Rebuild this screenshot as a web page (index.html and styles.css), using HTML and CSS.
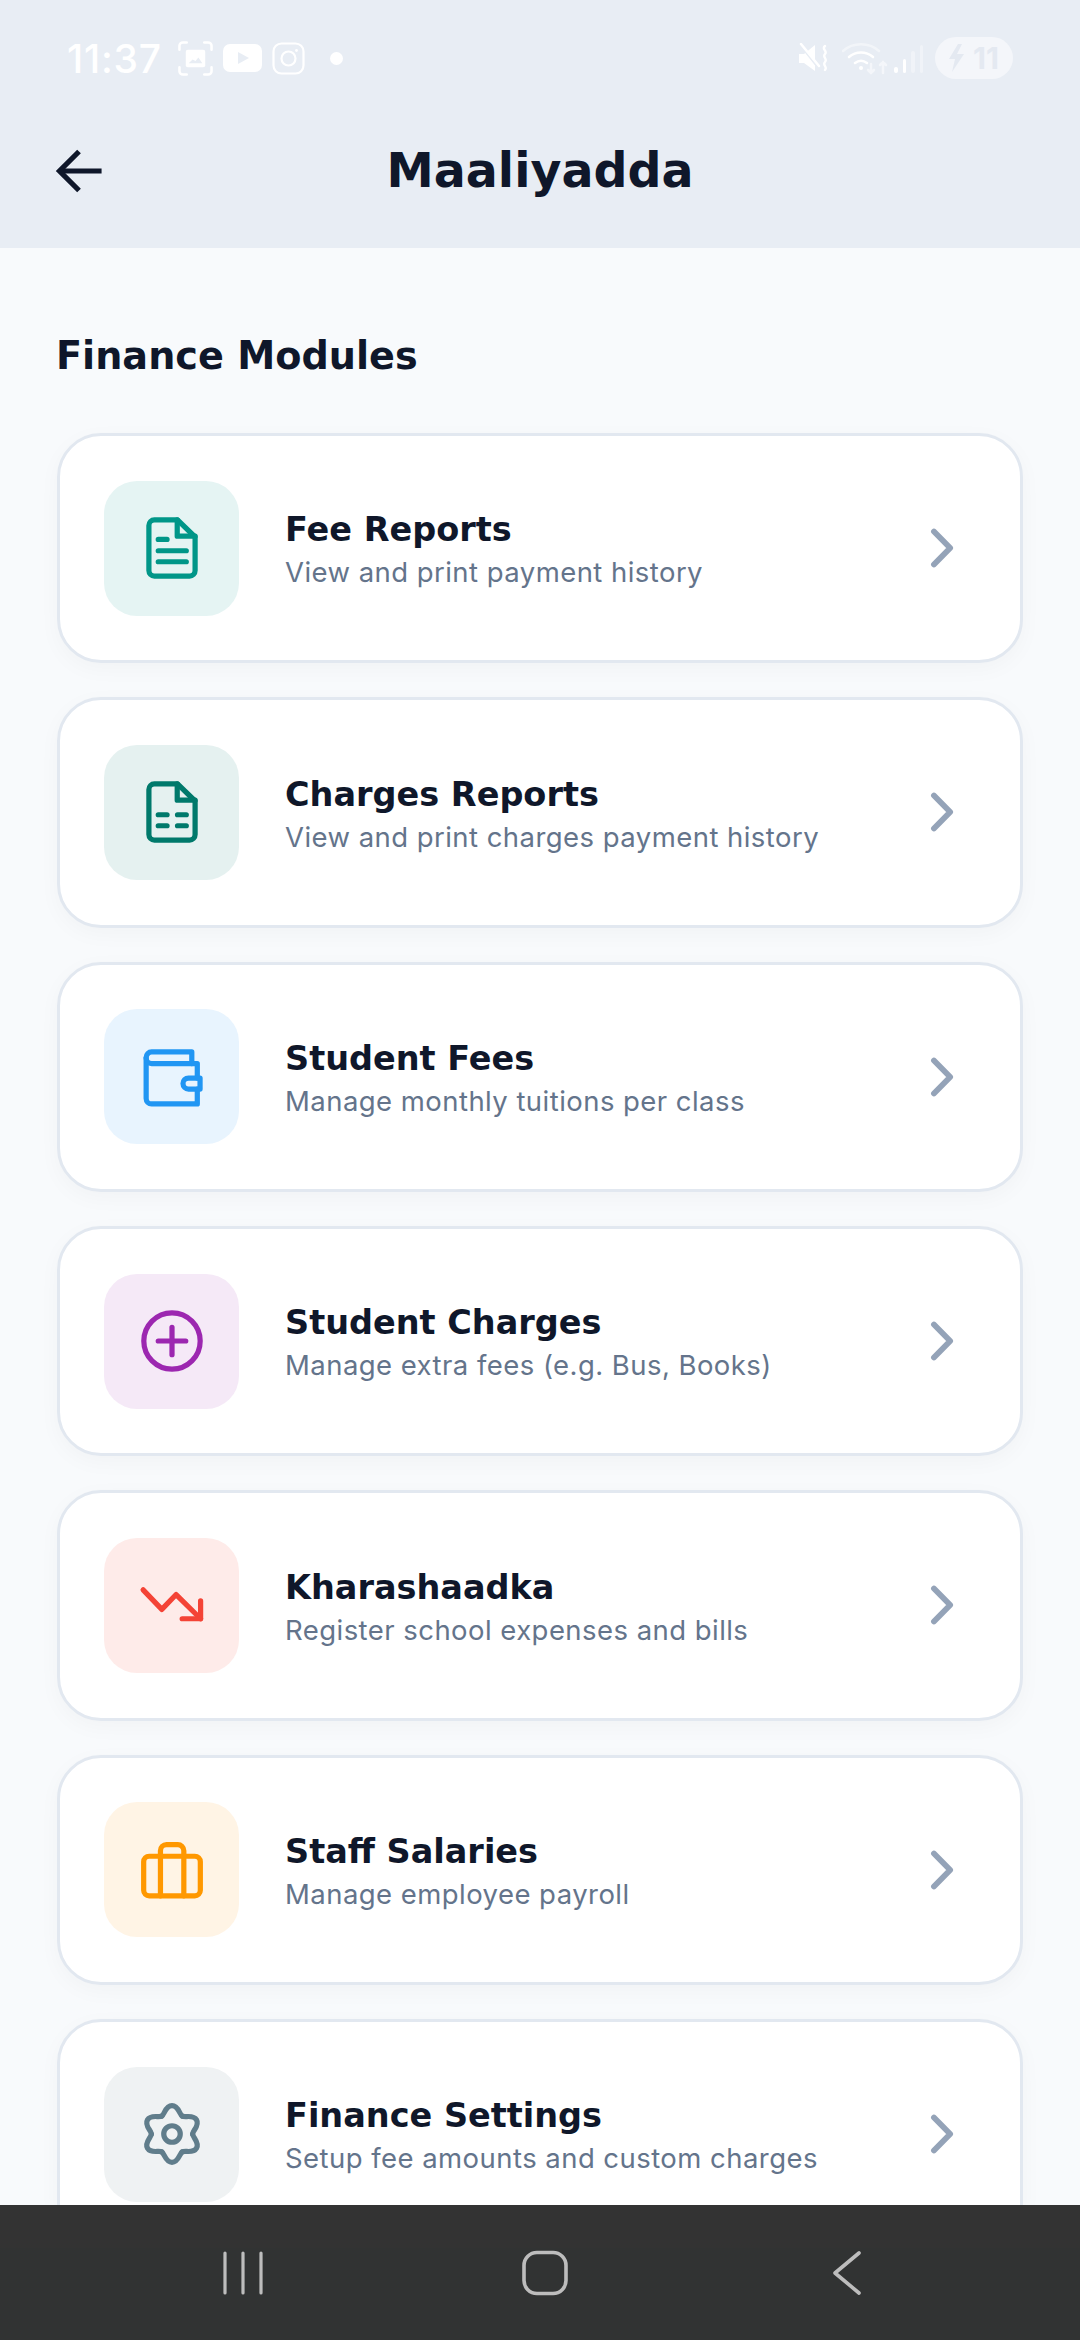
FILE: index.html
```html
<!DOCTYPE html>
<html lang="en">

<head>
  <meta charset="UTF-8">
  <meta name="viewport" content="width=device-width, initial-scale=1.0">
  <title>Maaliyadda</title>
  <link rel="stylesheet" href="styles.css">
</head>

<body>
  <div class="screen">
    <header class="header">
      <div class="status-bar">
        <div class="status-left">
          <span class="time">11:37</span>
          <svg class="st-icon" width="35" height="35" viewBox="0 0 36 36" fill="none" stroke="#fff" stroke-width="2.6" stroke-linecap="round">
            <path d="M1.5 9V5a3.500 3.500 0 0 1 3.500-3.500H9M27 1.500h4A3.500 3.500 0 0 1 34.500 5v4M1.500 27v4A3.500 3.500 0 0 0 5 34.500h4M27 34.500h4a3.500 3.500 0 0 0 3.500-3.500v-4" />
            <rect x="8" y="9" width="20" height="18" rx="2" fill="#fff" stroke="none" />
            <path d="M11 23l4-4 3 1.500 3-3.500 4 6z" fill="#e8edf4" stroke="none" />
          </svg>
          <svg class="st-icon" width="39" height="28" viewBox="0 0 39 28">
            <rect width="39" height="28" rx="7" fill="#fff" />
            <path d="M15 8l11 6-11 6z" fill="#e8edf4" />
          </svg>
          <svg class="st-icon" width="33" height="33" viewBox="0 0 33 33" fill="none" stroke="#fff" stroke-width="2.200">
            <rect x="1.500" y="1.500" width="30" height="30" rx="8" />
            <circle cx="16.500" cy="16.500" r="7" />
            <circle cx="24.500" cy="8.500" r="1.400" fill="#fff" stroke="none" />
          </svg>
          <span class="st-dot"></span>
        </div>
        <div class="status-right">
          <svg class="st-icon" width="30" height="30" viewBox="0 0 30 30" fill="none" stroke="#fff" stroke-linecap="round">
            <path d="M1 11h5l11-9v26l-11-8h-5z" fill="#fff" stroke="none" />
            <path d="M2 1l19 24" stroke="#e8edf4" stroke-width="3" />
            <path d="M3 1l18 22" stroke-width="2.500" />
            <path d="M27 3c-4 3 3 5 0 8s3 5 0 8 3 5 0 8" stroke-width="2.400" />
          </svg>
          <svg class="st-wifi" width="46" height="34" viewBox="0 0 46 34" fill="none" stroke="#fff" stroke-width="2.600" stroke-linecap="round">
            <path d="M1 9c10-9 26-9 36 0" opacity=".45" />
            <path d="M7 15c7-6 17-6 24 0" />
            <path d="M13 21c4-3 8-3 12 0" />
            <circle cx="19" cy="26" r="2" fill="#fff" stroke="none" />
            <path d="M29 22v9m-3-3l3 3 3-3" opacity=".5" />
            <path d="M41 31v-11m-3 3l3-3 3 3" opacity=".5" />
          </svg>
          <div class="st-signal">
            <span class="bar b1"></span>
            <span class="bar b2"></span>
            <span class="bar b3"></span>
            <span class="bar b4"></span>
          </div>
          <div class="st-battery">
            <svg width="16" height="28" viewBox="0 0 16 28">
              <path d="M9 0L0 15h6l-3 13L15 10H8l5-10z" fill="#e4e9f1" />
            </svg>
            <span>11</span>
          </div>
        </div>
      </div>
      <div class="app-bar">
        <svg class="back" width="66" height="66" viewBox="0 0 24 24" fill="none" stroke="#0f172a" stroke-width="1.900" stroke-linecap="butt">
          <path d="M21.300 12H6.500" />
          <path d="M13.100 4.900L6 12l7.100 7.100" />
        </svg>
        <h1 class="page-title">Maaliyadda</h1>
        <span class="app-bar-spacer"></span>
      </div>
    </header>

    <main class="content">
      <h2 class="section-title">Finance Modules</h2>
      <div class="list">

        <div class="card">
          <div class="card-icon teal">
            <svg width="66" height="66" viewBox="0 0 24 24" fill="none" stroke="#009688" stroke-width="1.900" stroke-linecap="round" stroke-linejoin="round">
              <path d="M5.600 1.800H14L20.400 8V20.200a2 2 0 0 1-2 2H5.600a2 2 0 0 1-2-2V3.800a2 2 0 0 1 2-2z" />
              <path d="M13.900 1.800V7.700H20.400" />
              <path d="M7 8.900H10.200M7 13H17.200M7 17H17.200" />
            </svg>
          </div>
          <div class="card-text">
            <div class="card-title">Fee Reports</div>
            <div class="card-sub">View and print payment history</div>
          </div>
          <svg class="chevron" width="66" height="66" viewBox="0 0 24 24" fill="none" stroke="#94a3b8" stroke-width="2.100" stroke-linecap="round" stroke-linejoin="round">
            <path d="M9.800 6L15.700 12L9.800 18" />
          </svg>
        </div>

        <div class="card">
          <div class="card-icon green">
            <svg width="66" height="66" viewBox="0 0 24 24" fill="none" stroke="#00796b" stroke-width="1.900" stroke-linecap="round" stroke-linejoin="round">
              <path d="M5.600 1.800H14L20.400 8V20.200a2 2 0 0 1-2 2H5.600a2 2 0 0 1-2-2V3.800a2 2 0 0 1 2-2z" />
              <path d="M13.900 1.800V7.700H20.400" />
              <path d="M7 13H10.200M14 13H17.200M7 17H10.200M14 17H17.200" />
            </svg>
          </div>
          <div class="card-text">
            <div class="card-title">Charges Reports</div>
            <div class="card-sub">View and print charges payment history</div>
          </div>
          <svg class="chevron" width="66" height="66" viewBox="0 0 24 24" fill="none" stroke="#94a3b8" stroke-width="2.100" stroke-linecap="round" stroke-linejoin="round">
            <path d="M9.800 6L15.700 12L9.800 18" />
          </svg>
        </div>

        <div class="card">
          <div class="card-icon blue">
            <svg width="66" height="66" viewBox="0 0 24 24" fill="none" stroke="#2196f3" stroke-width="1.900" stroke-linecap="round" stroke-linejoin="round">
              <path d="M19.200 7.100V2.900H4.600a2 2 0 0 0-2 2V19.800a2 2 0 0 0 2 2H21.200V16.400" />
              <path d="M21.200 12.400V7.100H4.600a2 2 0 0 1-2-2" />
              <path d="M22.200 12.400H18a2 2 0 0 0 0 4h4.200z" />
            </svg>
          </div>
          <div class="card-text">
            <div class="card-title">Student Fees</div>
            <div class="card-sub">Manage monthly tuitions per class</div>
          </div>
          <svg class="chevron" width="66" height="66" viewBox="0 0 24 24" fill="none" stroke="#94a3b8" stroke-width="2.100" stroke-linecap="round" stroke-linejoin="round">
            <path d="M9.800 6L15.700 12L9.800 18" />
          </svg>
        </div>

        <div class="card">
          <div class="card-icon purple">
            <svg width="66" height="66" viewBox="0 0 24 24" fill="none" stroke="#9c27b0" stroke-width="1.900" stroke-linecap="round" stroke-linejoin="round">
              <circle cx="12" cy="12" r="10.250" />
              <path d="M7 12H17M12 7V17" />
            </svg>
          </div>
          <div class="card-text">
            <div class="card-title">Student Charges</div>
            <div class="card-sub">Manage extra fees (e.g. Bus, Books)</div>
          </div>
          <svg class="chevron" width="66" height="66" viewBox="0 0 24 24" fill="none" stroke="#94a3b8" stroke-width="2.100" stroke-linecap="round" stroke-linejoin="round">
            <path d="M9.800 6L15.700 12L9.800 18" />
          </svg>
        </div>

        <div class="card">
          <div class="card-icon red">
            <svg width="66" height="66" viewBox="0 0 24 24" fill="none" stroke="#f44336" stroke-width="1.900" stroke-linecap="round" stroke-linejoin="round">
              <path d="M1.500 6.500L8.300 13.600L13.500 8.200L22.400 17" />
              <path d="M22.400 10.500V17H15.700" />
            </svg>
          </div>
          <div class="card-text">
            <div class="card-title">Kharashaadka</div>
            <div class="card-sub">Register school expenses and bills</div>
          </div>
          <svg class="chevron" width="66" height="66" viewBox="0 0 24 24" fill="none" stroke="#94a3b8" stroke-width="2.100" stroke-linecap="round" stroke-linejoin="round">
            <path d="M9.800 6L15.700 12L9.800 18" />
          </svg>
        </div>

        <div class="card">
          <div class="card-icon orange">
            <svg width="66" height="66" viewBox="0 0 24 24" fill="none" stroke="#ff9800" stroke-width="1.900" stroke-linecap="round" stroke-linejoin="round">
              <rect x="1.700" y="7" width="20.600" height="14.400" rx="2" />
              <path d="M7.800 21.400V5a2.200 2.200 0 0 1 2.200-2.200h4A2.200 2.200 0 0 1 16.300 5V21.400" />
            </svg>
          </div>
          <div class="card-text">
            <div class="card-title">Staff Salaries</div>
            <div class="card-sub">Manage employee payroll</div>
          </div>
          <svg class="chevron" width="66" height="66" viewBox="0 0 24 24" fill="none" stroke="#94a3b8" stroke-width="2.100" stroke-linecap="round" stroke-linejoin="round">
            <path d="M9.800 6L15.700 12L9.800 18" />
          </svg>
        </div>

        <div class="card">
          <div class="card-icon slate">
            <svg width="66" height="66" viewBox="0 0 24 24" fill="none" stroke="#607d8b" stroke-width="1.900" stroke-linecap="round" stroke-linejoin="round">
              <circle cx="12" cy="12" r="3" />
              <path id="lobe" d="M8.250 5.500C9.300 4.900 9.600 1.700 12 1.700S14.700 4.900 15.750 5.500" />
              <use href="#lobe" transform="rotate(60 12 12)" />
              <use href="#lobe" transform="rotate(120 12 12)" />
              <use href="#lobe" transform="rotate(180 12 12)" />
              <use href="#lobe" transform="rotate(240 12 12)" />
              <use href="#lobe" transform="rotate(300 12 12)" />
            </svg>
          </div>
          <div class="card-text">
            <div class="card-title">Finance Settings</div>
            <div class="card-sub">Setup fee amounts and custom charges</div>
          </div>
          <svg class="chevron" width="66" height="66" viewBox="0 0 24 24" fill="none" stroke="#94a3b8" stroke-width="2.100" stroke-linecap="round" stroke-linejoin="round">
            <path d="M9.800 6L15.700 12L9.800 18" />
          </svg>
        </div>

      </div>
    </main>

    <nav class="nav-bar">
      <svg width="60" height="60" viewBox="0 0 60 60" fill="none" stroke="#bdbdbd" stroke-width="3.200" stroke-linecap="round">
        <path d="M12 10V50M30 10V50M48 10V50" />
      </svg>
      <svg width="60" height="60" viewBox="0 0 60 60" fill="none" stroke="#bdbdbd" stroke-width="3.600">
        <rect x="9" y="9.500" width="42" height="41" rx="13" />
      </svg>
      <svg width="60" height="60" viewBox="0 0 60 60" fill="none" stroke="#bdbdbd" stroke-width="3.600" stroke-linecap="round" stroke-linejoin="round">
        <path d="M42 10L18 30L42 50" />
      </svg>
    </nav>
  </div>
</body>

</html>
```

FILE: styles.css
```css
* {
  box-sizing: border-box;
}

html,
body {
  margin: 0;
  padding: 0;
}

body {
  font-family: "Inter", "Liberation Sans", sans-serif;
  color: #0f172a;
}

.screen {
  display: flex;
  flex-direction: column;
  width: 1080px;
  height: 2340px;
  overflow: hidden;
  background-color: #f8fafc;
}

/* header */
.header {
  flex: none;
  height: 248px;
  background-color: #e8edf4;
}

.status-bar {
  display: flex;
  align-items: center;
  justify-content: space-between;
  height: 116px;
  padding: 0 67px 0 67px;
}

.status-left,
.status-right {
  display: flex;
  align-items: center;
}

.status-left svg {
  margin-left: 10px;
}

.time {
  width: 101px;
  font-size: 39px;
  font-weight: 500;
  letter-spacing: 0.8px;
  color: #fff;
}

.st-icon {
  display: block;
  flex: none;
}

.st-dot {
  width: 13px;
  height: 13px;
  margin-left: 25px;
  border-radius: 50%;
  background-color: #fff;
}

.st-wifi {
  margin-left: 14px;
  margin-top: 2px;
}

.st-signal {
  display: flex;
  align-items: flex-end;
  gap: 5px;
  height: 30px;
  margin-left: 6px;
  margin-right: 12px;
}

.st-signal .bar {
  width: 3.500px;
  border-radius: 2px;
  background-color: #fff;
}

.st-signal .b1 {
  height: 6px;
}

.st-signal .b2 {
  height: 14px;
}

.st-signal .b3 {
  height: 22px;
  opacity: .35;
}

.st-signal .b4 {
  height: 28px;
  opacity: .35;
}

.st-battery {
  display: flex;
  align-items: center;
  justify-content: center;
  gap: 8px;
  width: 78px;
  height: 42px;
  border-radius: 21px;
  background-color: #f4f6fa;
  font-size: 30px;
  font-weight: 700;
  color: #e4e9f1;
}

.app-bar {
  display: flex;
  align-items: center;
  justify-content: space-between;
  height: 110px;
  padding: 0 43px;
}

.back,
.app-bar-spacer {
  flex: none;
  width: 66px;
}

.page-title {
  margin: 0;
  font-family: "DejaVu Sans", sans-serif;
  font-size: 47.500px;
  font-weight: 700;
  line-height: 60px;
  color: #0f172a;
}

/* list */
.content {
  flex: 1;
  min-height: 0;
  overflow: hidden;
  padding: 83px 57px 0;
}

.section-title {
  margin: 0 0 52px -1px;
  font-family: "DejaVu Sans", sans-serif;
  font-size: 38.200px;
  font-weight: 700;
  line-height: 50px;
  color: #0f172a;
}

.list {
  display: flex;
  flex-direction: column;
  gap: 34px;
}

.card {
  display: flex;
  flex: none;
  align-items: center;
  padding: 44.670px 47px 44.670px 44px;
  border: 3px solid #e2e8f0;
  border-radius: 44px;
  background-color: #fff;
  box-shadow: 0 6px 22px rgba(15, 23, 42, 0.03);
}

.card-icon {
  display: flex;
  flex: none;
  align-items: center;
  justify-content: center;
  width: 135px;
  height: 135px;
  border-radius: 33px;
}

.card-icon.teal {
  background-color: #e5f4f3;
}

.card-icon.green {
  background-color: #e5f1f0;
}

.card-icon.blue {
  background-color: #e8f4fe;
}

.card-icon.purple {
  background-color: #f5e9f7;
}

.card-icon.red {
  background-color: #feebe9;
}

.card-icon.orange {
  background-color: #fff4e5;
}

.card-icon.slate {
  background-color: #eff2f3;
}

.card-text {
  flex: 1;
  min-width: 0;
  margin-left: 46px;
  padding-top: 1.500px;
}

.card-title {
  font-family: "DejaVu Sans", sans-serif;
  font-size: 33.500px;
  font-weight: 700;
  line-height: 46px;
  color: #0f172a;
}

.card-sub {
  margin-top: 1px;
  font-size: 27.500px;
  line-height: 36px;
  letter-spacing: 0.45px;
  color: #64748b;
}

.chevron {
  flex: none;
}

/* bottom nav */
.nav-bar {
  display: flex;
  flex: none;
  justify-content: center;
  gap: 242px;
  height: 135px;
  padding: 38px 0 0 10px;
  background: linear-gradient(#333 43px, #313333 43px);
}
```
